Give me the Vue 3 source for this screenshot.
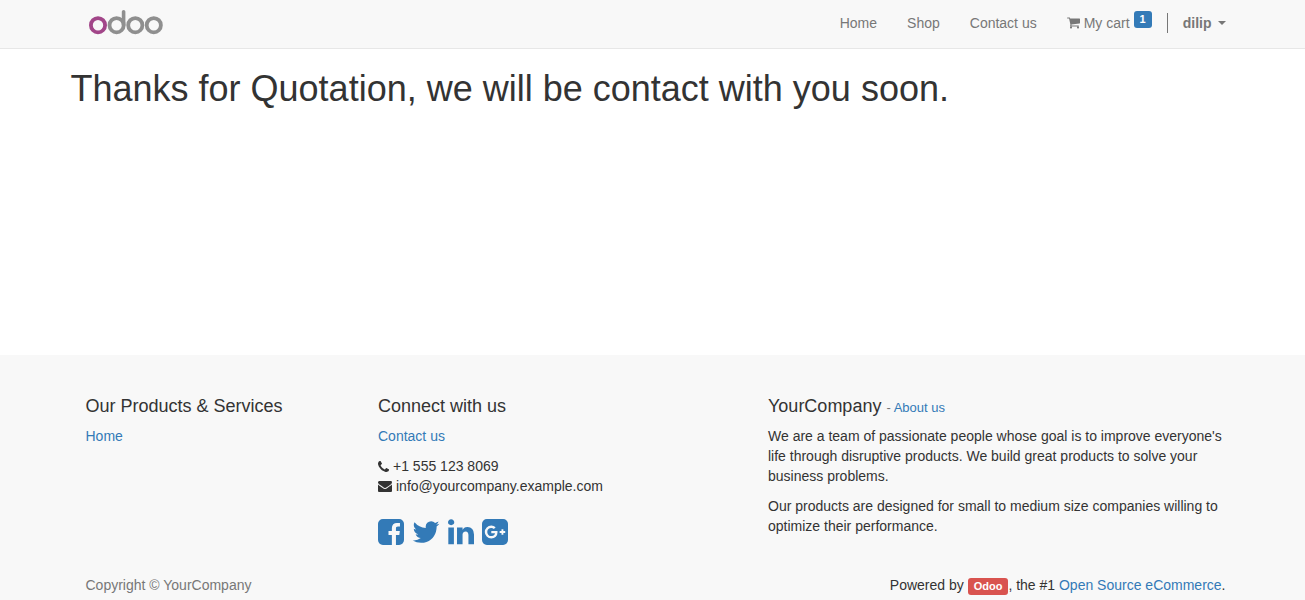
<script setup>
const navLinks = ['Home', 'Shop', 'Contact us']

const socials = [
  {
    name: 'Facebook',
    width: 26,
    path: 'M1376 128q119 0 203.500 84.500t84.500 203.500v960q0 119-84.500 203.500t-203.500 84.500h-188v-595h199l30-232h-229v-148q0-56 23.500-84t91.500-28l122-1v-207q-63-9-178-9-136 0-217.500 80t-81.500 226v171h-200v232h200v595h-532q-119 0-203.500-84.500t-84.500-203.500v-960q0-119 84.500-203.500t203.500-84.500h960z',
  },
  {
    name: 'Twitter',
    width: 28,
    path: 'M1684 408q-67 98-162 167 1 14 1 42 0 130-38 259.500t-115.500 248.500-184.500 210.500-258 146-323 54.500q-271 0-496-145 35 4 78 4 225 0 401-138-105-2-188-64.500t-114-159.500q33 5 61 5 43 0 85-11-112-23-185.500-111.500t-73.500-205.500v-4q68 38 146 41-66-44-105-115t-39-154q0-88 44-163 121 149 294.500 238.500t371.500 99.500q-8-38-8-74 0-134 94.500-228.500t228.500-94.500q140 0 236 102 109-21 205-78-37 115-142 178 93-10 186-50z',
  },
  {
    name: 'LinkedIn',
    width: 26,
    path: 'M477 625v991h-330v-991h330zm21-306q1 73-50.500 122t-135.500 49h-2q-82 0-132-49t-50-122q0-74 51.500-122.500t134.500-48.500 133 48.500 51 122.500zm1166 729v568h-329v-530q0-105-40.500-164.500t-126.500-59.500q-63 0-105.500 34.500t-63.500 85.500q-11 30-11 81v553h-329q2-399 2-647t-1-296l-1-48h329v144h-2q20-32 41-56t56.500-52 87-43.500 114.500-15.500q171 0 275 113.500t104 332.500z',
  },
  {
    name: 'Google Plus',
    width: 26,
    path: 'M1045 905q0-26-6-64h-362v132h217q-3 24-16.500 50t-37.500 53-66.500 44.500-96.500 17.500q-99 0-169-71t-70-171 70-171 169-71q92 0 153 59l104-101q-108-100-257-100-160 0-272 112.500t-112 271.500 112 271.500 272 112.500q165 0 266.500-105t101.500-270zm345 46h109v-110h-109v-110h-110v110h-110v110h110v110h110v-110zm274-535v960q0 119-84.500 203.500t-203.500 84.500h-960q-119 0-203.500-84.500t-84.500-203.500v-960q0-119 84.500-203.500t203.500-84.500h960q119 0 203.500 84.500t84.500 203.500z',
  },
]
</script>

<template>
  <div class="page">
    <header class="navbar">
      <div class="container bar">
        <a class="logo" href="#" aria-label="odoo">
          <svg width="76" height="26" viewBox="0 0 76 26" fill="none" stroke-width="3.8">
            <circle cx="9" cy="16.200" r="7.100" stroke="#a24689" />
            <g stroke="#8f8f8f">
              <circle cx="27.600" cy="16.200" r="7.100" />
              <path d="M34.600 2.800V16" stroke-linecap="round" stroke-width="3.600" />
              <circle cx="46.300" cy="16.200" r="7.100" />
              <circle cx="64.800" cy="16.200" r="7.100" />
            </g>
          </svg>
        </a>
        <nav class="nav">
          <a v-for="link in navLinks" :key="link" href="#">{{ link }}</a>
          <a class="cart" href="#">
            <svg width="13" height="12" viewBox="64 256 1664 1408" fill="currentColor" aria-hidden="true">
              <path d="M704 1536q0 52-38 90t-90 38-90-38-38-90 38-90 90-38 90 38 38 90zm896 0q0 52-38 90t-90 38-90-38-38-90 38-90 90-38 90 38 38 90zm128-1088v512q0 24-16.500 42.500t-40.500 21.500l-1044 122q13 60 13 70 0 16-24 64h920q26 0 45 19t19 45-19 45-45 19h-1024q-26 0-45-19t-19-45q0-11 8-31.500t16-36 21.500-40 15.500-29.500l-177-823h-204q-26 0-45-19t-19-45 19-45 45-19h256q16 0 28.500 6.500t19.500 15.500 13 24.500 8 26 5.500 29.500 4.500 26h1201q26 0 45 19t19 45z" />
            </svg>
            <span>My cart</span>
            <span class="badge">1</span>
          </a>
          <button class="user" type="button" aria-haspopup="true">
            <span>dilip</span>
            <i class="caret"></i>
          </button>
        </nav>
      </div>
    </header>

    <main>
      <div class="container">
        <h1>Thanks for Quotation, we will be contact with you soon.</h1>
      </div>
    </main>

    <footer>
      <div class="container columns">
        <section>
          <h4>Our Products &amp; Services</h4>
          <p><a href="#">Home</a></p>
        </section>
        <section>
          <h4>Connect with us</h4>
          <p><a href="#">Contact us</a></p>
          <ul class="contacts">
            <li>
              <svg width="11" height="11" viewBox="192 128 1408 1408" fill="currentColor" aria-hidden="true">
                <path d="M1600 1240q0 27-10 70.500t-21 68.500q-21 50-122 106-94 51-186 51-27 0-53-3.500t-57.500-12.500-47-14.500-55.500-20.500-49-18q-98-35-175-83-127-79-264-216t-216-264q-48-77-83-175-3-9-18-49t-20.500-55.500-14.500-47-12.500-57.500-3.500-53q0-92 51-186 56-101 106-122 25-11 68.500-21t70.500-10q14 0 21 3 18 6 53 76 11 19 30 54t35 63.500 31 53.500q3 4 17.500 25t21.500 35.500 7 28.500q0 20-28.500 50t-62 55-62 53-28.500 46q0 9 5 22.500t8.500 20.500 14 24 11.500 19q76 137 174 235t235 174q2 1 19 11.500t24 14 20.500 8.500 22.500 5q18 0 46-28.500t53-62 55-62 50-28.500q14 0 28.500 7t35.500 21.500 25 17.500q25 15 53.500 31t63.500 35 54 30q70 35 76 53 3 7 3 21z" />
              </svg>
              <span>+1 555 123 8069</span>
            </li>
            <li>
              <svg width="14" height="11" viewBox="0 256 1792 1408" fill="currentColor" aria-hidden="true">
                <path d="M1792 710v794q0 66-47 113t-113 47h-1472q-66 0-113-47t-47-113v-794q44 49 101 87 362 246 497 345 57 42 92.500 65.500t94.500 48 110 24.500h2q51 0 110-24.500t94.500-48 92.500-65.500q170-123 498-345 57-39 100-87zm0-294q0 79-49 151t-122 123q-376 261-468 325-10 7-42.500 31t-54 38.500-52 32.500-57.500 27-50 9h-2q-23 0-50-9t-57.500-27-52-32.500-54-38.500-42.500-31q-91-64-262-182.500t-205-142.500q-62-42-117-115.500t-55-136.500q0-78 41.500-130t118.500-52h1472q65 0 112.500 47t47.500 113z" />
              </svg>
              <span>info@yourcompany.example.com</span>
            </li>
          </ul>
          <div class="socials">
            <a v-for="s in socials" :key="s.name" href="#" :aria-label="s.name">
              <svg :width="s.width" height="26" viewBox="128 128 1536 1536" fill="currentColor"><path :d="s.path" /></svg>
            </a>
          </div>
        </section>
        <section>
          <h4>YourCompany <small>- <a href="#">About us</a></small></h4>
          <p>We are a team of passionate people whose goal is to improve everyone's life through disruptive products. We build great products to solve your business problems.</p>
          <p>Our products are designed for small to medium size companies willing to optimize their performance.</p>
        </section>
      </div>
      <div class="container bar legal">
        <span class="muted">Copyright © YourCompany</span>
        <span>Powered by <a class="label" href="#">Odoo</a>, the #1 <a href="#">Open Source eCommerce</a>.</span>
      </div>
    </footer>
  </div>
</template>

<style>
body {
  margin: 0;
}
</style>

<style scoped>
.page {
  display: flex;
  flex-direction: column;
  min-height: 100vh;
  font-family: "Liberation Sans", Arial, sans-serif;
  font-size: 14px;
  line-height: 20px;
  color: #333;
  background: #fff;
}
.page * {
  box-sizing: border-box;
}
header,
main,
footer {
  padding-left: 6px;
}
.container {
  max-width: 1170px;
  margin: 0 auto;
}
a {
  color: #337ab7;
  text-decoration: none;
}
svg {
  display: block;
  flex: none;
  overflow: visible;
}
.bar {
  display: flex;
  justify-content: space-between;
  padding: 0 15px;
}
.navbar {
  background: #f8f8f8;
  border-bottom: 1px solid #e7e7e7;
}
.navbar .bar {
  height: 48px;
}
.logo {
  padding: 9px 3px;
}
.nav {
  display: flex;
  gap: 30px;
  padding-top: 13px;
}
.nav a,
.user {
  height: 20px;
  color: #777;
}
.cart {
  display: flex;
  align-items: center;
  gap: 4px;
}
.nav .badge {
  align-self: flex-start;
  margin-top: -2px;
  padding: 0 6px;
  border-radius: 3px;
  background: #337ab7;
  color: #fff;
  font-size: 11px;
  font-weight: bold;
  line-height: 17px;
}
.user {
  display: flex;
  align-items: center;
  gap: 6px;
  margin-left: -15px;
  padding: 0 0 0 15px;
  border: 0;
  border-left: 1px solid #777;
  background: none;
  font: bold 14px/20px "Liberation Sans", Arial, sans-serif;
}
.caret {
  border: 4px solid transparent;
  border-top-color: #777;
  border-bottom: 0;
}
main {
  flex: 1;
}
h1 {
  margin: 20px 0 10px;
  font-size: 36px;
  font-weight: 500;
  line-height: 40px;
}
footer {
  background: #f8f8f8;
}
.columns {
  display: grid;
  grid-template-columns: 3fr 4fr 5fr;
  padding-top: 41px;
}
section {
  padding: 0 15px;
}
h4 {
  margin: 0 0 10px;
  font-size: 18px;
  font-weight: 500;
  line-height: 20px;
}
small {
  font-size: 13px;
  line-height: 1;
  color: #777;
}
p {
  margin: 0 0 10px;
}
.contacts {
  margin: 0;
  padding: 0;
  list-style: none;
}
.contacts li {
  display: flex;
  align-items: center;
  gap: 4px;
}
.socials {
  display: flex;
  gap: 8px;
  margin-top: 23px;
}
.legal {
  padding-top: 29px;
  padding-bottom: 5px;
}
.muted {
  color: #777;
}
.label {
  display: inline-block;
  padding: 0 6px;
  border-radius: 3px;
  background: #d9534f;
  color: #fff;
  font-size: 11px;
  font-weight: bold;
  line-height: 17px;
}
</style>
